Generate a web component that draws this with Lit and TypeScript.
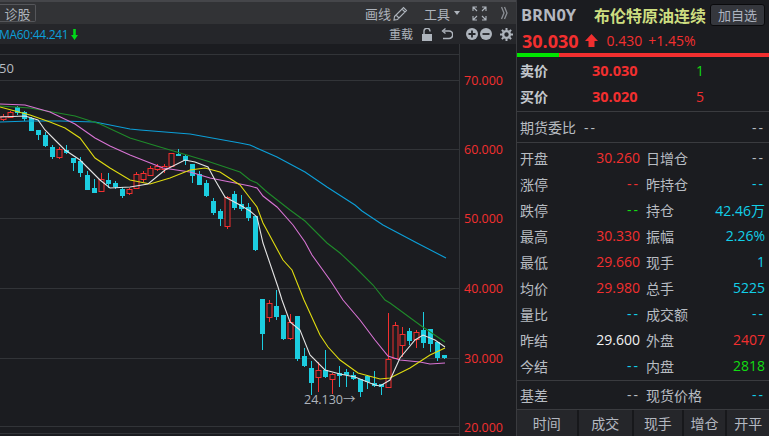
import { LitElement, html, css, svg } from "lit";
import { customElement } from "lit/decorators.js";

// top, bottom, wick top, wick bottom, r = hollow red, c = solid cyan
type Candle = [number, number, number, number, "r" | "c"];
const candles: Candle[] = [
  [116, 119, 114, 121, "r"], [112, 117, 111, 118, "r"], [107, 113, 106, 115, "c"], [112, 119, 111, 121, "c"],
  [118, 131, 117, 131, "c"], [130, 135, 130, 140, "c"], [135, 146, 132, 147, "c"], [147, 157, 145, 159, "c"],
  [149, 157, 147, 159, "r"], [150, 153, 145, 154, "c"], [158, 163, 158, 171, "c"], [161, 173, 157, 177, "c"],
  [175, 190, 171, 190, "c"], [188, 193, 179, 193, "c"], [179, 191, 173, 191, "r"], [180, 184, 173, 188, "c"],
  [183, 187, 181, 189, "c"], [189, 196, 187, 198, "c"], [189, 193, 188, 195, "r"], [174, 188, 172, 189, "r"],
  [173, 179, 171, 182, "r"], [168, 175, 166, 176, "r"], [166, 169, 164, 171, "r"], [166, 169, 164, 173, "r"],
  [153, 166, 153, 167, "r"], [154, 156, 149, 156, "c"], [156, 161, 155, 165, "c"], [164, 176, 164, 183, "c"],
  [174, 185, 171, 185, "c"], [183, 196, 180, 197, "c"], [201, 213, 198, 215, "c"], [211, 219, 209, 226, "c"],
  [197, 226, 196, 229, "r"], [194, 208, 191, 210, "c"], [204, 209, 195, 211, "c"], [207, 218, 203, 221, "c"],
  [216, 250, 216, 251, "c"], [299, 334, 299, 350, "c"], [303, 317, 300, 322, "r"], [306, 317, 290, 320, "c"],
  [315, 339, 315, 340, "c"], [322, 338, 314, 340, "r"], [316, 359, 316, 361, "c"], [356, 366, 348, 367, "c"],
  [368, 383, 361, 395, "c"], [370, 377, 362, 392, "r"], [370, 377, 350, 378, "c"], [374, 379, 373, 394, "r"],
  [373, 376, 366, 387, "c"], [372, 375, 369, 387, "c"], [375, 379, 372, 380, "c"], [379, 392, 379, 397, "c"],
  [376, 382, 375, 389, "c"], [383, 386, 371, 387, "c"], [384, 387, 384, 395, "c"], [359, 387, 313, 387, "r"],
  [325, 358, 322, 358, "r"], [334, 345, 327, 357, "r"], [331, 341, 328, 345, "c"], [332, 339, 330, 348, "r"],
  [330, 343, 312, 348, "c"], [329, 344, 329, 352, "c"], [342, 358, 342, 361, "c"], [355, 358, 355, 359, "c"],
];

const lines: [string, string][] = [
  ["#0c9fd8", "0,122 30,121 60,121 95,122 130,129 140,130 190,134 240,143 250,145 277,157 305,172 327,187 355,205 362,211 383,225 417,243 446,258"],
  ["#1f8a2a", "0,106 30,108 75,116 100,124 130,138 160,147 207,161 240,172 250,180 257,183 267,192 290,210 305,221 327,243 340,253 355,267 373,285 385,300 390,303 420,325 445,342"],
  ["#d874d4", "0,104 25,105 50,112 75,124 95,138 110,146 130,155 163,168 190,172 210,178 230,182 250,186 257,188 263,196 277,207 293,225 305,242 312,255 330,280 343,300 360,320 375,340 388,356 400,360 420,362 430,364 445,363"],
  ["#e0dc10", "0,107 30,115 50,122 65,128 80,138 95,158 110,168 130,180 150,184 170,178 190,170 205,168 220,172 240,185 250,198 257,207 263,223 283,260 292,270 304,300 320,335 328,347 340,360 358,373 380,379 390,378 410,368 430,355 445,348"],
  ["#e4e4e4", "0,117 25,116 38,120 45,130 55,140 65,150 80,160 90,170 100,180 110,188 130,187 148,184 165,170 185,160 195,162 208,167 215,180 225,197 240,205 250,211 257,217 263,243 278,287 282,300 290,322 300,330 310,355 325,370 340,374 355,377 375,385 380,386 390,380 400,358 415,340 423,335 435,340 445,347"],
];

const axis: [string, number][] = [["70.000", 80], ["60.000", 149], ["50.000", 218], ["40.000", 288], ["30.000", 358], ["20.000", 427]];

type Stat = [string, string, string, string, string, string];
const stats: Stat[] = [
  ["开盘", "30.260", "red", "日增仓", "--", "grey"],
  ["涨停", "--", "red", "昨持仓", "--", "cyan"],
  ["跌停", "--", "green", "持仓", "42.46万", "cyan"],
  ["最高", "30.330", "red", "振幅", "2.26%", "cyan"],
  ["最低", "29.660", "red", "现手", "1", "cyan"],
  ["均价", "29.980", "red", "总手", "5225", "cyan"],
  ["量比", "--", "cyan", "成交额", "--", "cyan"],
  ["昨结", "29.600", "white", "外盘", "2407", "red"],
  ["今结", "--", "cyan", "内盘", "2818", "green"],
];

@customElement("app-root")
export class AppRoot extends LitElement {
  static styles = css`
    :host {
      display: flex;
      width: 769px;
      height: 436px;
      overflow: hidden;
      background: #1b1c20;
      color: #b8bcc2;
      font-family: "Open Sans", "Noto Sans CJK SC", sans-serif;
      font-size: 14px;
    }
    .chart-col {
      width: 516px;
      display: flex;
      flex-direction: column;
    }
    .toolbar {
      height: 22px;
      border-top: 2px solid #45464a;
      background: #323336;
      display: flex;
      align-items: center;
      font-size: 13px;
      color: #aeb4bc;
    }
    .zhengu {
      width: 35px;
      height: 16px;
      margin-right: auto;
      border: 1px solid #55565a;
      border-left: none;
      border-radius: 0 2px 2px 0;
      display: flex;
      align-items: center;
      justify-content: center;
      font-size: 13px;
    }
    .tool-a { margin-left: 2px; display: flex; }
    .tool-b { margin-left: 15px; }
    .caret { margin-left: 4px; width: 0; height: 0; border: 3.5px solid transparent; border-top: 4px solid #aeb4bc; border-bottom: none; }
    .tool-c { margin-left: 12px; display: flex; }
    .tool-d { margin: 0 8px 0 14px; display: flex; }
    .subbar {
      height: 20px;
      background: #25262a;
      display: flex;
      align-items: center;
      font-size: 13px;
    }
    .ma {
      margin-left: -1px;
      color: #0c9fd8;
      font-size: 12px;
      letter-spacing: -0.3px;
    }
    .down { margin: 0 auto 0 3px; display: flex; }
    .reload { font-size: 12px; color: #aeb4bc; }
    .ico { display: flex; }
    .lock { margin-left: 9px; }
    .undo { margin-left: 9px; }
    .plus { margin-left: 13px; }
    .minus { margin-left: 2px; }
    .gear { margin: 0 3px 0 8px; }
    svg { display: block; }
    .canvas { flex: 1; }
    .canvas text { font-family: "Open Sans", "Noto Sans CJK SC", sans-serif; }
    .panel {
      width: 252px;
      border-left: 1px solid #3a3b3f;
      display: flex;
      flex-direction: column;
    }
    .head {
      height: 29px;
      display: flex;
      align-items: center;
      padding-left: 4px;
    }
    .code { font-size: 16.5px; font-weight: bold; color: #b4b8c0; width: 73px; }
    .name { font-size: 16px; font-weight: bold; color: #cdde80; width: 116px; white-space: nowrap; }
    .add {
      width: 55px;
      height: 22px;
      box-sizing: border-box;
      border: 1px solid #0a0a0c;
      border-radius: 3px;
      background: #35373d;
      color: #aeb4c0;
      display: flex;
      align-items: center;
      justify-content: center;
      font-size: 13px;
    }
    .quote {
      height: 23px;
      display: flex;
      align-items: center;
      padding-left: 5px;
      color: #f22f2f;
    }
    .price { font-size: 18px; font-weight: bold; }
    .up { margin: 0 9px 0 6px; display: flex; }
    .chg { margin-right: 6px; }
    .band { height: 4px; background: #f22f2f; margin-top: 1px; }
    .band div { width: 42px; height: 100%; background: #00e600; }
    .book { height: 54px; border-bottom: 1px solid #3a3b3f; display: flex; flex-direction: column; }
    .book-row { height: 26px; display: flex; align-items: center; padding-left: 3px; }
    .book-label { width: 72px; font-weight: bold; color: #c4c8ce; }
    .book-price { width: 104px; font-size: 14.5px; font-weight: bold; color: #f22f2f; }
    .book-qty { font-size: 14px; }
    .ratio {
      height: 30px;
      border-bottom: 1px solid #3a3b3f;
      display: flex;
      align-items: center;
      padding: 0 4px 0 3px;
    }
    .ratio .first { margin-left: 8px; margin-right: auto; }
    .val-dash { letter-spacing: 2px; }
    .stats { height: 238px; border-bottom: 1px solid #3a3b3f; padding-top: 2px; box-sizing: border-box; }
    .row {
      height: 26px;
      display: grid;
      grid-template-columns: 120px 1fr;
      gap: 6px;
      padding: 0 4px 0 3px;
      align-items: center;
    }
    .cell { display: flex; justify-content: space-between; white-space: nowrap; }
    .basis { height: 28px; padding: 0 4px 0 3px; display: grid; grid-template-columns: 120px 1fr; gap: 6px; align-items: center; }
    .red { color: #f22f2f; }
    .green { color: #12dc12; }
    .cyan { color: #12cfe8; }
    .white { color: #f2f2f2; }
    .grey { color: #b8bcc2; }
    .tabs {
      flex: 1;
      display: flex;
      gap: 2px;
      background: #17181b;
      border-top: 1px solid #3a3b3f;
    }
    .tab {
      background: #25262a;
      display: flex;
      align-items: center;
      justify-content: center;
      color: #b4b8c0;
    }
  `;

  private chart() {
    return svg`
      ${[54, 80, 149, 218, 288, 358, 426, 433].map(
        (y) => svg`<line x1="0" x2="459" y1=${y + 0.5} y2=${y + 0.5} stroke="#323438"></line>`
      )}
      <line x1="459.5" x2="459.5" y1="44" y2="436" stroke="#323438"></line>
      <text x="-1" y="73" font-size="13" fill="#b8bcc2">50</text>
      ${axis.map(([t, y]) => svg`<text x="464" y=${y + 5} font-size="12.5" fill="#f22f2f">${t}</text>`)}
      ${candles.map(([top, bot, wt, wb, kind], i) => {
        const x = 3 + i * 7;
        const col = kind === "r" ? "#f22f2f" : "#1ccde0";
        return svg`
          <line x1=${x + 0.5} x2=${x + 0.5} y1=${wt} y2=${wb} stroke=${col}></line>
          ${kind === "r"
            ? svg`<rect x=${x - 2} y=${top + 0.5} width="5" height=${bot - top} fill="#1b1c20" stroke=${col}></rect>`
            : svg`<rect x=${x - 2} y=${top} width="5" height=${bot - top} fill=${col}></rect>`}
        `;
      })}
      ${lines.map(([c, p]) => svg`<polyline points=${p} fill="none" stroke=${c} stroke-width="1.1"></polyline>`)}
      <text x="304" y="404" font-size="12.5" fill="#aeb4bc">24.130→</text>
    `;
  }

  private val(v: string, cls: string) {
    return html`<span class="${cls} ${v === "--" ? "val-dash" : ""}">${v}</span>`;
  }

  render() {
    return html`
      <div class="chart-col">
        <div class="toolbar">
          <div class="zhengu">诊股</div>
          <span>画线</span>
          <span class="tool-a">
            <svg width="16" height="16" viewBox="0 0 16 16" fill="none" stroke="#aeb4bc" stroke-width="1.1">
              <path d="M1.5 11.5 10.5 2.5 13.5 5.5 4.5 14.5 1 15Z M9 4 12 7 M3 10 6 13"></path>
            </svg>
          </span>
          <span class="tool-b">工具</span>
          <span class="caret"></span>
          <span class="tool-c">
            <svg width="15" height="15" viewBox="0 0 15 15" fill="none" stroke="#aeb4bc" stroke-width="1.1">
              <path d="M1 5V1H5M1 1 5 5M10 1H14V5M14 1 10 5M1 10V14H5M1 14 5 10M14 10V14H10M14 14 10 10"></path>
            </svg>
          </span>
          <span class="tool-d">
            <svg width="7" height="14" viewBox="0 0 7 14" fill="none" stroke="#8c9096" stroke-width="1.3">
              <path d="M0.5 1 3 7 0.5 13M3.5 1 6 7 3.5 13"></path>
            </svg>
          </span>
        </div>
        <div class="subbar">
          <span class="ma">MA60:44.241</span>
          <span class="down">
            <svg width="7" height="11" viewBox="0 0 7 11"><path d="M2.2 0H4.8V6H7L3.5 11 0 6H2.2Z" fill="#00d818"></path></svg>
          </span>
          <span class="reload">重载</span>
          <span class="ico lock">
            <svg width="10" height="13" viewBox="0 0 10 13">
              <path d="M2 6V3.5A3 3 0 0 1 8 3V3.5" fill="none" stroke="#aeb4bc" stroke-width="1.4"></path>
              <path d="M0 6H10V13H0Z" fill="#aeb4bc"></path>
            </svg>
          </span>
          <span class="ico undo">
            <svg width="12" height="12" viewBox="0 0 12 12" fill="none" stroke="#aeb4bc" stroke-width="1.6">
              <path d="M3 3H8A3.3 3.3 0 0 1 8 10.5H2"></path>
              <path d="M4.5 0.5 1.5 3 4.5 5.5" stroke-width="1.3"></path>
            </svg>
          </span>
          <span class="ico plus">
            <svg width="12" height="12" viewBox="0 0 12 12">
              <circle cx="6" cy="6" r="6" fill="#aeb4bc"></circle>
              <path d="M2.5 6H9.5M6 2.5V9.5" stroke="#25262a" stroke-width="1.8"></path>
            </svg>
          </span>
          <span class="ico minus">
            <svg width="12" height="12" viewBox="0 0 12 12">
              <circle cx="6" cy="6" r="6" fill="#aeb4bc"></circle>
              <path d="M2.5 6H9.5" stroke="#25262a" stroke-width="1.8"></path>
            </svg>
          </span>
          <span class="ico gear">
            <svg width="13" height="13" viewBox="0 0 13 13">
              <circle cx="6.5" cy="6.5" r="3.4" fill="none" stroke="#aeb4bc" stroke-width="2.4"></circle>
              <path d="M6.5 0V13M0 6.5H13M1.9 1.9 11.1 11.1M11.1 1.9 1.9 11.1" stroke="#aeb4bc" stroke-width="2" stroke-dasharray="2.2 8.6"></path>
            </svg>
          </span>
        </div>
        <svg class="canvas" width="516" height="392" viewBox="0 44 516 392">${this.chart()}</svg>
      </div>
      <div class="panel">
        <div class="head">
          <span class="code">BRN0Y</span>
          <span class="name">布伦特原油连续</span>
          <span class="add">加自选</span>
        </div>
        <div class="quote">
          <span class="price">30.030</span>
          <span class="up">
            <svg width="13" height="13" viewBox="0 0 13 13"><path d="M6.5 0 13 7H9.5V13H3.5V7H0Z" fill="#f22f2f"></path></svg>
          </span>
          <span class="chg">0.430</span>
          <span>+1.45%</span>
        </div>
        <div class="band"><div></div></div>
        <div class="book">
          <div class="book-row">
            <span class="book-label">卖价</span><span class="book-price">30.030</span><span class="book-qty green">1</span>
          </div>
          <div class="book-row">
            <span class="book-label">买价</span><span class="book-price">30.020</span><span class="book-qty red">5</span>
          </div>
        </div>
        <div class="ratio"><span>期货委比</span><span class="first val-dash">--</span><span class="val-dash">--</span></div>
        <div class="stats">
          ${stats.map(
            ([a, b, c, d, e, f]) => html`
              <div class="row">
                <div class="cell"><span>${a}</span>${this.val(b, c)}</div>
                <div class="cell"><span>${d}</span>${this.val(e, f)}</div>
              </div>
            `
          )}
        </div>
        <div class="basis">
          <div class="cell"><span>基差</span>${this.val("--", "grey")}</div>
          <div class="cell"><span>现货价格</span>${this.val("--", "cyan")}</div>
        </div>
        <div class="tabs">
          ${([["时间", 60], ["成交", 54], ["现手", 48], ["增仓", 42], ["开平", 42]] as [string, number][]).map(
            ([t, w]) => html`<div class="tab" style="width:${w}px">${t}</div>`
          )}
        </div>
      </div>
    `;
  }
}
